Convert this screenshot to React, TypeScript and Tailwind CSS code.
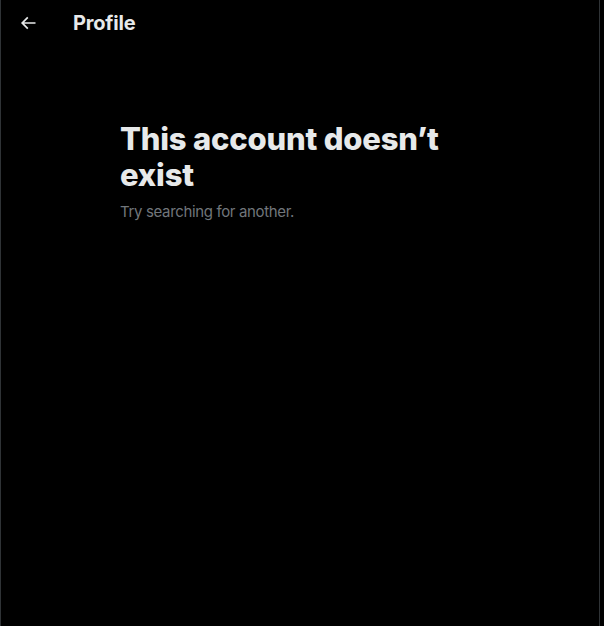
import { useState } from "react";

function BackArrow() {
  return (
    <svg viewBox="0 0 24 24" className="h-5 w-5 fill-[#e7e9ea]" aria-hidden="true">
      <path d="M7.414 13l5.043 5.04-1.414 1.42L3.586 12l7.457-7.46 1.414 1.42L7.414 11H21v2H7.414z" />
    </svg>
  );
}

export default function App() {
  const [query] = useState("");

  return (
    <div className="min-h-screen bg-black font-['Inter','Noto_Sans',sans-serif] text-[#e7e9ea]">
      <div className="flex min-h-[626px] w-[600px] flex-col border-x border-[#2f3336]">
        {/* Header */}
        <div className="flex h-[45px] items-center px-[9px]">
          <button
            type="button"
            className="flex h-9 w-9 items-center justify-center rounded-full hover:bg-white/10"
          >
            <BackArrow />
          </button>
          <h2 className="ml-[27px] text-[20px] font-bold leading-6 tracking-[-0.2px]">
            Profile
          </h2>
        </div>

        {/* Empty state */}
        <div className="mx-auto mt-[76px] w-[400px] px-5">
          <h1 className="text-[31px] font-extrabold leading-9 tracking-[-0.2px]">
            This account doesn’t exist
          </h1>
          <p className="mt-[9px] text-[15px] leading-5 tracking-[-0.35px] text-[#71767b]">
            {query || "Try searching for another."}
          </p>
        </div>
      </div>
    </div>
  );
}
